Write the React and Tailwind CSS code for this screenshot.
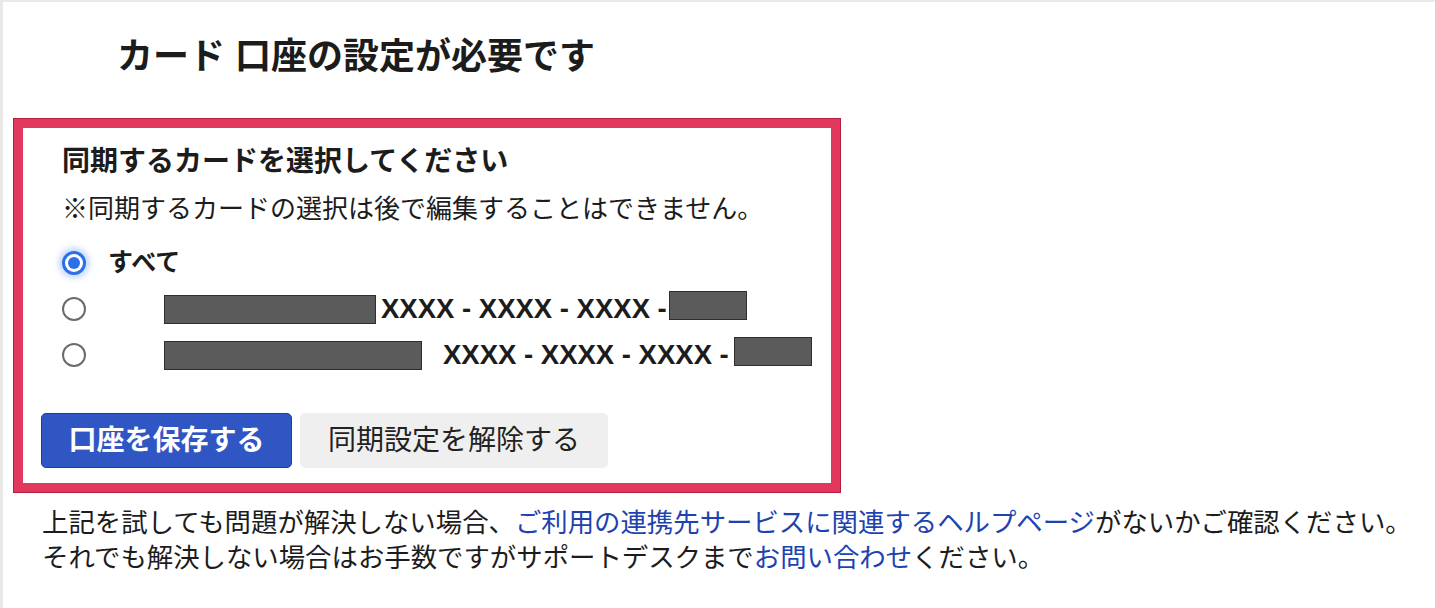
import { useState } from 'react';

const cards = [
  { id: 'a', name: 'w-[212px]', gap: 'ml-[5px]', tail: 'ml-[2px]' },
  { id: 'b', name: 'w-[258px]', gap: 'ml-[21px]', tail: 'ml-[5px]' },
];

function Radio({ checked, onClick }) {
  if (checked) {
    return (
      <button
        onClick={onClick}
        className="flex h-6 w-6 shrink-0 items-center justify-center rounded-full bg-[#2d6fe6] shadow-[0_0_6px_3px_rgba(70,130,240,0.35)]"
      >
        <span className="flex h-[18px] w-[18px] items-center justify-center rounded-full bg-white">
          <span className="h-3 w-3 rounded-full bg-[#2d6fe6]" />
        </span>
      </button>
    );
  }
  return (
    <button
      onClick={onClick}
      className="h-6 w-6 shrink-0 rounded-full border-2 border-[#6b6b6b] bg-white"
    />
  );
}

function Redacted({ w }) {
  return <span className={`${w} inline-block h-[29px] border border-[#2e2e2e] bg-[#5b5b5b]`} />;
}

export default function App() {
  const [picked, setPicked] = useState('all');

  return (
    <div className="h-[608px] w-full border-l-[3px] border-t-2 border-[#e9e9e9] bg-white font-['Liberation_Sans','Noto_Sans_CJK_JP',sans-serif] text-[#1c1c1c]">
      <h1 className="pl-[114px] pt-[33px] text-[36px] font-bold leading-[44px]">
        カード 口座の設定が必要です
      </h1>

      <div className="ml-[11px] mt-[40px] w-[826px] border-[9px] border-[#e2385e] shadow-[0_0_0_1px_#b51e40]">
        <div className="pb-[15px] pl-[18px] pt-[15px]">
          <div className="pl-[21px]">
            <p className="text-[28px] font-bold leading-[38px]">同期するカードを選択してください</p>
            <p className="mt-[10px] text-[26px] leading-[36px]">
              ※同期するカードの選択は後で編集することはできません。
            </p>
            <div className="mt-[13px] flex flex-col">
              <label className="flex h-[46px] items-center">
                <Radio checked={picked === 'all'} onClick={() => setPicked('all')} />
                <span className="ml-[22px] text-[25px] font-bold">すべて</span>
              </label>
              {cards.map((c) => (
                <label key={c.id} className="flex h-[46px] items-center">
                  <Radio checked={picked === c.id} onClick={() => setPicked(c.id)} />
                  <span className="ml-[78px] flex items-center">
                    <Redacted w={c.name} />
                    <span className={`${c.gap} text-[27.5px] font-bold leading-none`}>
                      XXXX - XXXX - XXXX -
                    </span>
                    <span className={c.tail}>
                      <Redacted w="w-[78px]" />
                    </span>
                  </span>
                </label>
              ))}
            </div>
          </div>

          <div className="mt-[35px] flex gap-2">
            <button className="h-[55px] w-[251px] rounded-[5px] border border-[#1d3c9c] bg-[#3056c4] text-[28px] font-bold text-white">
              口座を保存する
            </button>
            <button className="h-[55px] w-[308px] rounded-[5px] bg-[#efefef] text-[28px] text-[#222]">
              同期設定を解除する
            </button>
          </div>
        </div>
      </div>

      <div className="mt-[14px] pl-[39px] text-[26.4px] leading-[35px]">
        <p>
          上記を試しても問題が解決しない場合、
          <a href="#" className="text-[#1d43b0]">ご利用の連携先サービスに関連するヘルプページ</a>
          がないかご確認ください。
        </p>
        <p>
          それでも解決しない場合はお手数ですがサポートデスクまで
          <a href="#" className="text-[#1d43b0]">お問い合わせ</a>
          ください。
        </p>
      </div>
    </div>
  );
}
